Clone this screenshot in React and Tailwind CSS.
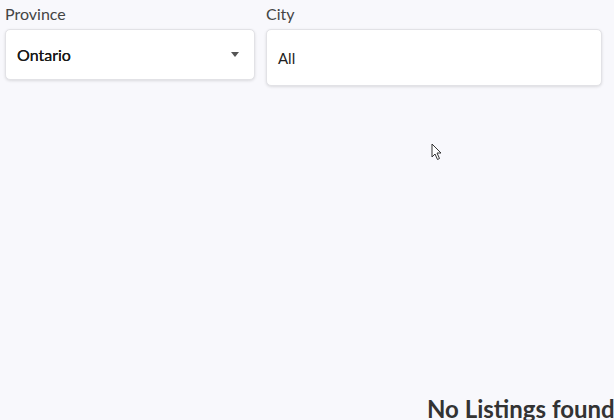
export default function App() {
  return (
    <div
      className="relative h-[420px] w-[614px] overflow-hidden bg-[#f8f8fc] text-[#222]"
      style={{ fontFamily: "Lato, 'Liberation Sans', sans-serif" }}
    >
      <div className="flex items-start gap-[11px] pl-[5px] pt-[5px]">
        <div className="flex w-[250px] flex-col">
          <label className="text-[16px] leading-[18px] text-[#444]">Province</label>
          <div className="mt-[6px] flex h-[51px] items-center justify-between rounded-[5px] border border-[#e2e2e6] bg-white pl-[11px] pr-[15px] shadow-[0_1px_3px_rgba(0,0,0,0.12)]">
            <span className="text-[16px] text-[#1a1a1a] [text-shadow:0_0_0.4px_#1a1a1a]">Ontario</span>
            <span className="h-0 w-0 border-x-[4px] border-t-[5px] border-x-transparent border-t-[#555]" />
          </div>
        </div>
        <div className="flex w-[336px] flex-col">
          <label className="text-[16px] leading-[18px] text-[#444]">City</label>
          <div className="mt-[6px] flex h-[57px] items-center rounded-[5px] border border-[#e2e2e6] bg-white px-[11px] pt-[2px] shadow-[0_1px_3px_rgba(0,0,0,0.12)]">
            <span className="text-[15px] text-[#222]">All</span>
          </div>
        </div>
      </div>

      <svg className="absolute left-[431px] top-[143px]" width="12" height="18" viewBox="0 0 12 18">
        <path d="M1 1 L1 14 L4 11 L6.5 16.5 L8.5 15.5 L6 10 L10 10 Z" fill="white" stroke="#333" strokeWidth="1" />
      </svg>

      <div className="absolute left-[427px] top-[395px] whitespace-nowrap text-[24px] font-bold leading-[28px] text-[#333]">
        No Listings found
      </div>
    </div>
  );
}
